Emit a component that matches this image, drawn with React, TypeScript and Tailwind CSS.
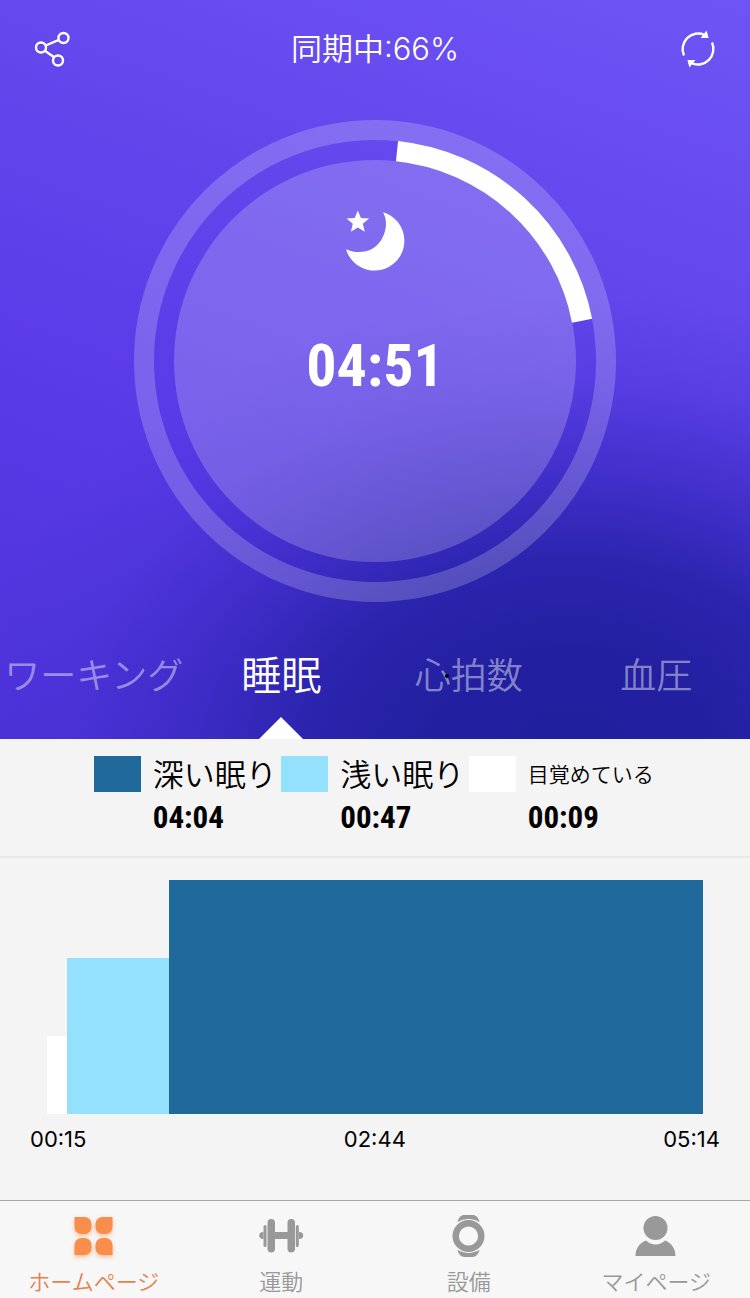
import React, { useState } from 'react';

const sleepPhases = [
  { id: 'awake', minutes: 9, level: 1, color: 'bg-white' },
  { id: 'light', minutes: 47, level: 2, color: 'bg-[#94e1fe]' },
  { id: 'deep', minutes: 244, level: 3, color: 'bg-[#1f6a9b]' },
];

const legend = [
  { label: '深い眠り', time: '04:04', color: 'bg-[#1f6a9b]', size: 'text-[31px]' },
  { label: '浅い眠り', time: '00:47', color: 'bg-[#94e1fe]', size: 'text-[31px]' },
  { label: '目覚めている', time: '00:09', color: 'bg-white', size: 'text-[21px]' },
];

const tabs = ['ワーキング', '睡眠', '心拍数', '血圧'];

const ShareIcon = () => (
  <svg viewBox="0 0 36 36" className="w-9 h-9" fill="none" stroke="currentColor" strokeWidth="2.4">
    <circle cx="7" cy="16.500" r="5" />
    <circle cx="29.500" cy="7" r="5" />
    <circle cx="24" cy="29.500" r="5" />
    <path d="M11.700 14.500 24.900 8.900M10.800 19.800l9.400 6.500" />
  </svg>
);

const SyncIcon = () => (
  <svg viewBox="0 0 36 38" className="w-9 h-[38px]" fill="none" stroke="currentColor" strokeWidth="2.400">
    <path d="M4 25.500A15.600 15.600 0 0 1 24.500 4.800" />
    <path d="M32 12.500A15.600 15.600 0 0 1 11.500 33.200" />
    <path d="M26.600 .6 28.600 8h-8z" fill="currentColor" stroke="none" />
    <path d="M9.400 37.400 7.400 30h8z" fill="currentColor" stroke="none" />
  </svg>
);

const MoonIcon = () => (
  <svg viewBox="0 0 60 62" className="w-[60px] h-[62px]" fill="currentColor">
    <path d="M38 2.200A29.800 29.800 0 1 1 1 39.200C15.500 45.500 30 41 36.500 29.500C42 20 42.500 10 38 2.200Z" />
    <path d="M12.800.5l3.100 7.400 8.200.6-6.300 5.200 2 8-7-4.300-7 4.300 2-8L1.500 8.500l8.200-.6z" />
  </svg>
);

const HomeIcon = () => (
  <svg viewBox="0 0 48 48" className="w-12 h-12 text-[#f98d4b] drop-shadow-[0_2px_2px_rgba(249,141,75,0.55)]" fill="currentColor">
    <path d="M4.500 5h10a7 7 0 0 1 7 7v3a7 7 0 0 1-7 7h-3a7 7 0 0 1-7-7z" />
    <path d="M42.500 5h-10a7 7 0 0 0-7 7v3a7 7 0 0 0 7 7h3a7 7 0 0 0 7-7z" />
    <path d="M4.500 43h10a7 7 0 0 0 7-7v-3a7 7 0 0 0-7-7h-3a7 7 0 0 0-7 7z" />
    <path d="M42.500 43h-10a7 7 0 0 1-7-7v-3a7 7 0 0 1 7-7h3a7 7 0 0 1 7 7z" />
  </svg>
);

const DumbbellIcon = () => (
  <svg viewBox="0 0 48 48" className="w-12 h-12" fill="currentColor">
    <rect x="10.500" y="7" width="7.500" height="33.500" rx="3.700" />
    <rect x="30.500" y="7" width="7.500" height="33.500" rx="3.700" />
    <rect x="16" y="20" width="16" height="7" />
    <rect x="6.500" y="13" width="3" height="22" rx="1.500" />
    <rect x="38.800" y="13" width="3" height="22" rx="1.500" />
    <path d="M6.500 20.200a3.500 3.500 0 1 0 0 6.800zM42 20.200a3.500 3.500 0 1 1 0 6.800z" />
  </svg>
);

const WatchIcon = () => (
  <svg viewBox="0 0 48 48" className="w-12 h-12" fill="currentColor">
    <circle cx="23.500" cy="24" r="12.800" fill="none" stroke="currentColor" strokeWidth="6.400" />
    <path d="M12.500 10.200C13.500 5.500 16 3 19.500 3h8c3.500 0 6 2.500 7 7.200C27.500 6 19.500 6 12.500 10.200z" />
    <path d="M12.500 37.800C13.500 42.500 16 45 19.500 45h8c3.500 0 6-2.500 7-7.200C27.500 42 19.500 42 12.500 37.800z" />
  </svg>
);

const UserIcon = () => (
  <svg viewBox="0 0 48 48" className="w-12 h-12" fill="currentColor">
    <circle cx="23.500" cy="16" r="12" />
    <path d="M3.500 44c0-7.500 4-13 10.500-15.500 5.500 5.300 13.500 5.300 19 0C39.500 31 43.500 36.500 43.500 44z" />
  </svg>
);

const navItems = [
  { label: 'ホームページ', Icon: HomeIcon, active: true },
  { label: '運動', Icon: DumbbellIcon, active: false },
  { label: '設備', Icon: WatchIcon, active: false },
  { label: 'マイページ', Icon: UserIcon, active: false },
];

const SleepDial = () => (
  <div className="relative mx-auto mt-[22px] w-[482px] h-[482px] rounded-full border-[20px] border-white/20 p-5">
    <svg viewBox="-241 -241 482 482" className="absolute -inset-5 w-[482px] h-[482px]" fill="none">
      {/* progress arc, 6deg to 79deg clockwise from the top */}
      <path d="M22 -209.900A211 211 0 0 1 207.100 -40.300" stroke="white" strokeWidth="20.500" />
    </svg>
    <div className="flex flex-col items-center w-full h-full rounded-full bg-white/20 pt-[50px] text-white">
      <MoonIcon />
      <span className="mt-[58px] text-[60px] leading-[72px] font-bold font-['Roboto_Condensed','Liberation_Sans_Narrow','Liberation_Sans',sans-serif]">
        04:51
      </span>
    </div>
  </div>
);

export default function App() {
  const [activeTab, setActiveTab] = useState('睡眠');

  return (
    <div className="flex flex-col min-h-screen bg-[#f4f4f4] text-black font-['Inter','Noto_Sans_CJK_JP',sans-serif]">
      <section className="bg-[radial-gradient(ellipse_82%_62%_at_76%_102%,#201f9e_0%,#2220a0_22%,rgba(37,33,166,0.88)_42%,rgba(50,38,184,0.6)_62%,rgba(64,46,205,0.25)_82%,rgba(80,56,225,0)_100%),linear-gradient(20deg,#4c32d8_0%,#5a3be8_38%,#6246ec_65%,#6f54f5_100%)]">
        <header className="flex items-center justify-between h-[98px] px-[34px] text-white">
          <button aria-label="共有"><ShareIcon /></button>
          <h1 className="text-[31px] leading-10 font-[350]">同期中:66%</h1>
          <button aria-label="同期"><SyncIcon /></button>
        </header>

        <SleepDial />

        <div role="tablist" className="grid grid-cols-4 h-[137px]">
          {tabs.map(tab => (
            <button
              key={tab}
              role="tab"
              aria-selected={tab === activeTab}
              onClick={() => setActiveTab(tab)}
              className={`relative pt-2.5 whitespace-nowrap font-[350] ${
                tab === activeTab ? 'text-[40px] text-white' : 'text-[36px] text-white/45'
              }`}
            >
              {tab}
              {tab === '心拍数' && <span className="absolute left-[70px] top-[72px] w-1 h-1 rounded-full bg-black" />}
              {tab === activeTab && (
                <svg viewBox="0 0 44 22" className="absolute bottom-0 left-1/2 -translate-x-1/2 w-11 h-[22px]">
                  <path d="M0 22 22 0 44 22z" fill="white" />
                </svg>
              )}
            </button>
          ))}
        </div>
      </section>

      <section className="grid grid-cols-3 h-[119px] px-[12.5%] pt-[17px] border-b-2 border-[#e8e8e8]">
        {legend.map(item => (
          <div key={item.label} className="flex gap-3">
            <span className={`w-[47px] h-9 shrink-0 ${item.color}`} />
            <div className="whitespace-nowrap">
              <div className={`leading-[38px] font-[350] ${item.size}`}>{item.label}</div>
              <div className="mt-1.5 text-[31px] leading-9 font-bold font-['Roboto_Condensed','Liberation_Sans_Narrow','Liberation_Sans',sans-serif]">
                {item.time}
              </div>
            </div>
          </div>
        ))}
      </section>

      <section className="flex-1 pt-[22px]">
        <div className="flex items-end h-[234px] mx-[47px]">
          {sleepPhases.map(phase => (
            <div
              key={phase.id}
              className={phase.color}
              style={{ flexGrow: phase.minutes, flexBasis: 0, height: `${(phase.level / 3) * 100}%` }}
            />
          ))}
        </div>
        <div className="flex justify-between mt-[11px] px-[30px] text-[22px] leading-7">
          <span>00:15</span>
          <span>02:44</span>
          <span>05:14</span>
        </div>
      </section>

      <nav className="grid grid-cols-4 h-[98px] border-t border-[#a8a6a6] bg-[#f7f7f7]">
        {navItems.map(({ label, Icon, active }) => (
          <a
            key={label}
            href="#"
            className={`flex flex-col items-center pt-[11px] whitespace-nowrap ${active ? 'text-[#e58250]' : 'text-[#999999]'}`}
          >
            <Icon />
            <span className="mt-2 text-[22px] leading-7 font-[350]">{label}</span>
          </a>
        ))}
      </nav>
    </div>
  );
}
